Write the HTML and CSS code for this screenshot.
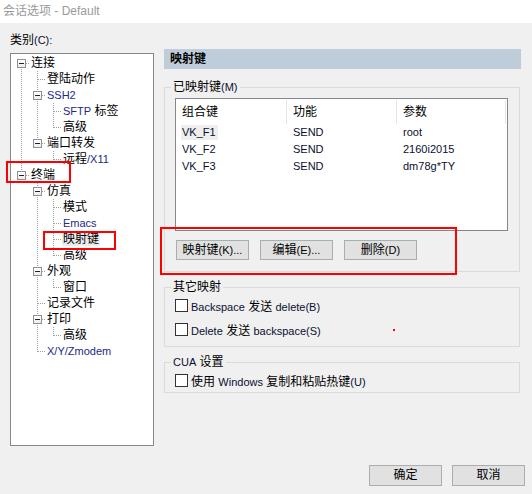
FILE: index.html
```html
<!DOCTYPE html>
<html lang="zh-CN">
<head>
<meta charset="utf-8">
<title>会话选项 - Default</title>
<link rel="stylesheet" href="styles.css">
</head>
<body>
<div class="titlebar">会话选项 - Default</div>
<div class="main">
  <div class="left">
    <div class="label">类别<span class="l">(C):</span></div>
    <div class="tree">
      <div class="row"><i class="c dn"><b class="tg"></b></i><span class="t">连接</span></div>
      <div class="row"><i class="c v"></i><i class="c tee"></i><span class="t">登陆动作</span></div>
      <div class="row"><i class="c v"></i><i class="c tee"><b class="tg"></b></i><span class="t l blue">SSH2</span></div>
      <div class="row"><i class="c v"></i><i class="c v"></i><i class="c tee"></i><span class="t"><span class="l blue">SFTP</span> 标签</span></div>
      <div class="row"><i class="c v"></i><i class="c v"></i><i class="c elb"></i><span class="t">高级</span></div>
      <div class="row"><i class="c v"></i><i class="c elb"><b class="tg"></b></i><span class="t">端口转发</span></div>
      <div class="row"><i class="c v"></i><i class="c"></i><i class="c elb"></i><span class="t">远程<span class="l blue">/X11</span></span></div>
      <div class="row"><i class="c elb"><b class="tg"></b></i><span class="t">终端</span></div>
      <div class="row"><i class="c"></i><i class="c tee"><b class="tg"></b></i><span class="t">仿真</span></div>
      <div class="row"><i class="c"></i><i class="c v"></i><i class="c tee"></i><span class="t">模式</span></div>
      <div class="row"><i class="c"></i><i class="c v"></i><i class="c tee"></i><span class="t l blue">Emacs</span></div>
      <div class="row"><i class="c"></i><i class="c v"></i><i class="c tee"></i><span class="t sel">映射键</span></div>
      <div class="row"><i class="c"></i><i class="c v"></i><i class="c elb"></i><span class="t">高级</span></div>
      <div class="row"><i class="c"></i><i class="c tee"><b class="tg"></b></i><span class="t">外观</span></div>
      <div class="row"><i class="c"></i><i class="c v"></i><i class="c elb"></i><span class="t">窗口</span></div>
      <div class="row"><i class="c"></i><i class="c tee"></i><span class="t">记录文件</span></div>
      <div class="row"><i class="c"></i><i class="c tee"><b class="tg"></b></i><span class="t">打印</span></div>
      <div class="row"><i class="c"></i><i class="c v"></i><i class="c elb"></i><span class="t">高级</span></div>
      <div class="row"><i class="c"></i><i class="c elb"></i><span class="t l blue">X/Y/Zmodem</span></div>
    </div>
  </div>
  <div class="right">
    <div class="header">映射键</div>
    <div class="group g1">
      <div class="gtitle">已映射键<span class="l">(M)</span></div>
      <div class="list">
        <div class="lrow lhead"><span>组合键</span><span>功能</span><span>参数</span><span></span></div>
        <div class="lrow l"><span><em class="focus">VK_F1</em></span><span>SEND</span><span>root</span><span></span></div>
        <div class="lrow l"><span>VK_F2</span><span>SEND</span><span>2160i2015</span><span></span></div>
        <div class="lrow l"><span>VK_F3</span><span>SEND</span><span>dm78g*TY</span><span></span></div>
      </div>
      <div class="btns">
        <button class="btn">映射键<span class="l">(K)...</span></button>
        <button class="btn">编辑<span class="l">(E)...</span></button>
        <button class="btn">删除<span class="l">(D)</span></button>
      </div>
    </div>
    <div class="group g2">
      <div class="gtitle">其它映射</div>
      <div class="checks">
        <label class="check"><span class="cb"></span><span><span class="l">Backspace</span> 发送 <span class="l">delete(B)</span></span></label>
        <label class="check"><span class="cb"></span><span><span class="l">Delete</span> 发送 <span class="l">backspace(S)</span></span></label>
      </div>
    </div>
    <div class="group g3">
      <div class="gtitle"><span class="l">CUA</span> 设置</div>
      <div class="checks">
        <label class="check"><span class="cb"></span><span>使用 <span class="l">Windows</span> 复制和粘贴热键<span class="l">(U)</span></span></label>
      </div>
    </div>
  </div>
</div>
<div class="footer">
  <button class="btn big">确定</button>
  <button class="btn big">取消</button>
</div>
<div class="mark m1"></div>
<div class="mark m2"></div>
<div class="mark m3"></div>
<div class="dot"></div>
</body>
</html>
```
FILE: styles.css
```css
:root {
  --dv: repeating-linear-gradient(to bottom, #a0a0a0 0 1px, transparent 1px 2px);
  --dh: repeating-linear-gradient(to right, #a0a0a0 0 1px, transparent 1px 2px);
}
* { box-sizing: border-box; }
html, body { margin: 0; padding: 0; }
body {
  width: 532px;
  height: 494px;
  background: #f0f0f0;
  display: flex;
  flex-direction: column;
  position: relative;
  overflow: hidden;
  font-family: "Liberation Sans", "Noto Sans CJK SC", sans-serif;
  font-size: 12px;
  color: #000;
}
.l { font-size: 11px; color: #0a0f30; }
.blue { color: #1a2a88; }
.titlebar {
  height: 23px;
  line-height: 23px;
  background: #fff;
  color: #9a9a9a;
  padding-left: 3px;
  font-size: 12px;
}
.main { display: flex; }
.left { margin-left: 10px; width: 144px; }
.label { margin-top: 9px; height: 16px; line-height: 16px; }
.tree {
  margin-top: 5px;
  width: 144px;
  height: 393px;
  border: 1px solid #828790;
  background: #fff;
  padding: 1px 0 0 2px;
}
.row {
  display: flex;
  align-items: center;
  height: 16px;
  line-height: 16px;
  white-space: nowrap;
}
.c {
  display: flex;
  flex: none;
  width: 16px;
  height: 16px;
}
.v { background: var(--dv) 8px 0 / 1px 16px no-repeat; }
.tee { background: var(--dh) 9px 8px / 7px 1px no-repeat, var(--dv) 8px 0 / 1px 16px no-repeat; }
.elb { background: var(--dh) 9px 8px / 7px 1px no-repeat, var(--dv) 8px 0 / 1px 9px no-repeat; }
.dn { background: var(--dh) 9px 8px / 7px 1px no-repeat, var(--dv) 8px 8px / 1px 8px no-repeat; }
.tg {
  width: 9px;
  height: 9px;
  margin: 4px 0 0 4px;
  border: 1px solid #919191;
  background: linear-gradient(#222, #222) 1px 3px / 5px 1px no-repeat, linear-gradient(#fff, #ececec);
}
.t { margin-left: 2px; }
.sel { background: #ececec; padding: 0 1px; margin-left: 1px; line-height: 13px; }

.right { margin-left: 10px; width: 357px; }
.header {
  margin-top: 26px;
  height: 20px;
  line-height: 20px;
  padding-left: 6px;
  background: #bfcddb;
  font-weight: bold;
}
.group {
  width: 356px;
  border: 1px solid #dadada;
}
.g1 { margin-top: 18px; padding-bottom: 11px; }
.g2 { margin-top: 15px; padding-bottom: 8px; }
.g3 { margin-top: 15px; padding-bottom: 3px; }
.gtitle {
  width: fit-content;
  height: 16px;
  line-height: 16px;
  margin: -9px 0 0 6px;
  padding: 0 2px;
  background: #f0f0f0;
}
.list {
  margin: 3px 0 0 10px;
  width: 333px;
  height: 133px;
  border: 1px solid #828790;
  background: #fff;
}
.lrow {
  display: grid;
  grid-template-columns: 111px 110px 109px 1fr;
  height: 17px;
  line-height: 17px;
  white-space: nowrap;
}
.lrow > span { padding-left: 6px; }
.lhead { height: 25px; }
.lhead > span {
  margin-top: 1px;
  height: 24px;
  line-height: 24px;
  border-right: 1px solid #e5e5e5;
}
.lhead > span:last-child { border-right: 0; }
.focus {
  font-style: normal;
  background: #eeeeee;
  margin-left: -1px;
  padding: 0 2px 0 1px;
  display: inline-block;
  line-height: 15px;
}
.btns { display: flex; gap: 11px; margin: 9px 0 0 11px; }
.btn {
  width: 73px;
  height: 20px;
  padding: 0;
  border: 1px solid #adadad;
  background: #e1e1e1;
  font: inherit;
  color: #000;
  line-height: 18px;
}
.btn .l { color: #000; }
.big { height: 21px; line-height: 19px; }
.checks { display: flex; flex-direction: column; gap: 7px; margin-top: 2px; }
.check {
  display: flex;
  align-items: center;
  height: 17px;
  margin-left: 10px;
  gap: 3px;
  white-space: nowrap;
}
.cb {
  width: 13px;
  height: 13px;
  border: 1px solid #333;
  background: #fff;
}
.footer {
  margin-top: auto;
  display: flex;
  justify-content: flex-end;
  gap: 10px;
  padding: 0 7px 8px 0;
}
.mark { position: absolute; border: 2px solid #ff0000; }
.m1 { left: 6px; top: 161px; width: 65px; height: 22px; }
.m2 { left: 43px; top: 231px; width: 73px; height: 19px; }
.m3 { left: 160px; top: 227px; width: 297px; height: 48px; }
.dot { position: absolute; left: 393px; top: 329px; width: 2px; height: 2px; background: #ff0000; }
```
